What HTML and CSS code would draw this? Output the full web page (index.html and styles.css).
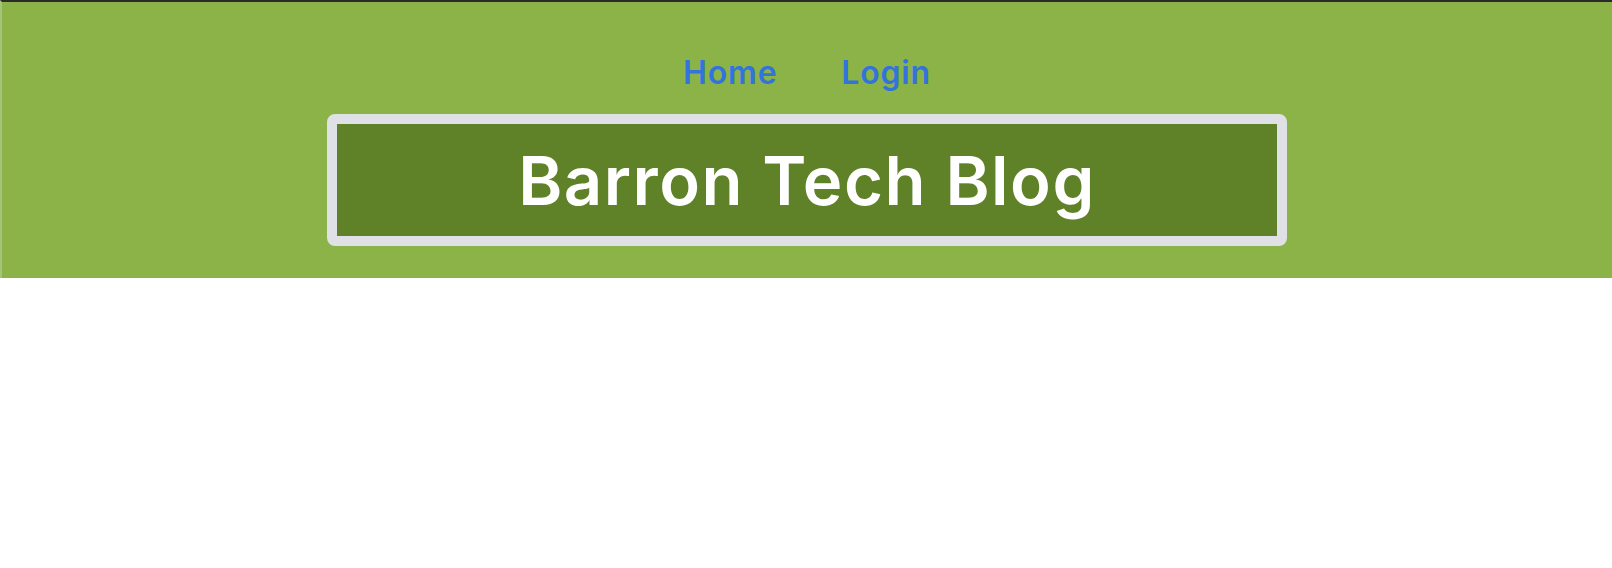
FILE: index.html
```html
<!DOCTYPE html>
<html lang="en">
<head>
<meta charset="utf-8">
<title>Barron Tech Blog</title>
<link rel="stylesheet" href="styles.css">
</head>
<body>
<header class="site-header">
  <nav class="nav">
    <a class="nav-link" href="#">Home</a>
    <a class="nav-link" href="#">Login</a>
  </nav>
  <div class="title-box">
    <h1 class="title">Barron Tech Blog</h1>
  </div>
</header>
</body>
</html>
```
FILE: styles.css
```css
html, body {
  margin: 0;
  padding: 0;
  background: #ffffff;
}
body {
  font-family: Inter, "Open Sans", sans-serif;
}
.site-header {
  background: #8bb347;
  border-top: 2px solid #2b2b2b;
  border-left: 2px solid #a6c37c;
  padding: 51px 0 32px;
  display: flex;
  flex-direction: column;
  align-items: center;
}
.nav {
  display: flex;
  gap: 64px;
  height: 40px;
  align-items: center;
}
.nav-link {
  font-size: 32px;
  line-height: 40px;
  font-weight: 600;
  letter-spacing: 0.8px;
  color: #3273dc;
  text-decoration: none;
}
.title-box {
  margin-top: 21px;
  width: 960px;
  height: 132px;
  box-sizing: border-box;
  border: 10px solid #dfe1e6;
  border-radius: 8px;
  background: #5f8127;
  display: flex;
  align-items: center;
  justify-content: center;
}
.title {
  margin: 0;
  font-size: 67px;
  line-height: 1;
  font-weight: 600;
  letter-spacing: 1.5px;
  color: #ffffff;
}
```
